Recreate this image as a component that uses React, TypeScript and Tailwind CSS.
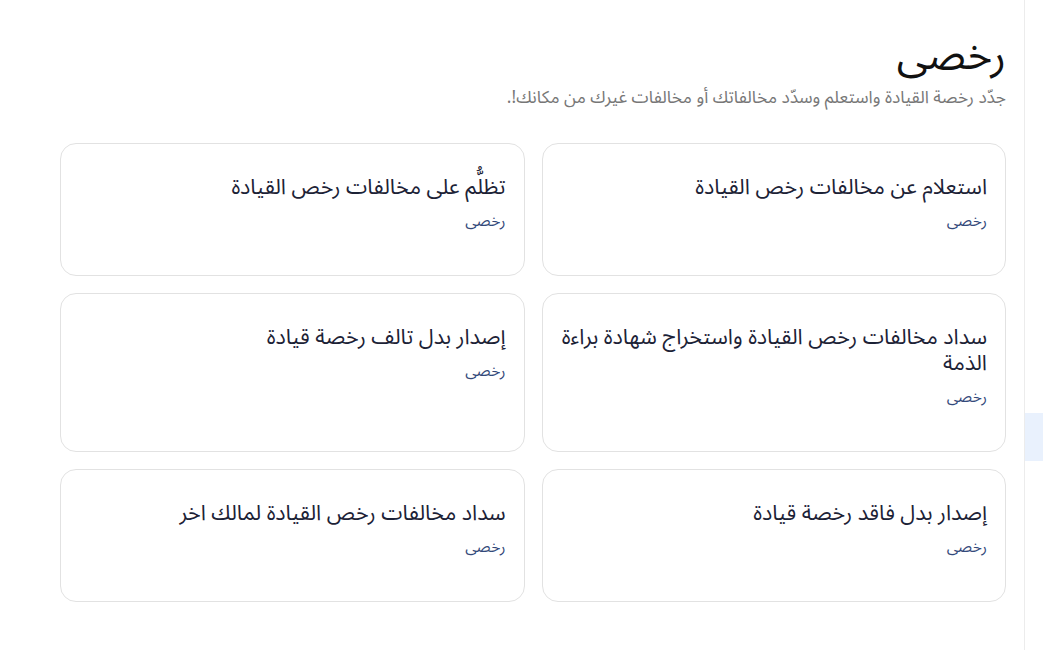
import React from "react";

const services = [
  { title: "استعلام عن مخالفات رخص القيادة", tall: false },
  { title: "تظلُّم على مخالفات رخص القيادة", tall: false },
  { title: "سداد مخالفات رخص القيادة واستخراج شهادة براءة الذمة", tall: true },
  { title: "إصدار بدل تالف رخصة قيادة", tall: true },
  { title: "إصدار بدل فاقد رخصة قيادة", tall: false },
  { title: "سداد مخالفات رخص القيادة لمالك اخر", tall: false },
];

const App = () => {
  return (
    <div
      dir="rtl"
      className="flex h-[650px] w-[1043px] bg-white overflow-hidden"
      style={{ fontFamily: '"Noto Sans Arabic", "Noto Sans", "DejaVu Sans", sans-serif' }}
    >
      {/* side rail */}
      <div className="w-[19px] shrink-0 border-l border-[#ececec] bg-white pt-[413px]">
        <div className="h-[48px] bg-[#e9f1fd]"></div>
      </div>

      <div className="flex-1 pr-[18px] pl-[60px] pt-[28px]">
        <h1 className="text-[42px] leading-[56px] text-[#111111]">رخصى</h1>
        <p className="mt-[2px] text-[17.3px] leading-[24px] text-[#777777]">
          جدّد رخصة القيادة واستعلم وسدّد مخالفاتك أو مخالفات غيرك من مكانك!.
        </p>

        <div className="mt-[33px] grid grid-cols-2 gap-x-[17px] gap-y-[17px]">
          {services.map((s) => (
            <div
              key={s.title}
              className={`rounded-[16px] border border-[#e2e2e2] bg-white px-[18px] pt-[30px] ${
                s.tall ? "h-[159px]" : "h-[133px]"
              }`}
            >
              <div className="text-[21.5px] leading-[26px] text-[#1c2236]">{s.title}</div>
              <div className="mt-[10px] text-[15.5px] leading-[22px] text-[#33497a]">رخصى</div>
            </div>
          ))}
        </div>
      </div>
    </div>
  );
};

export default App;
